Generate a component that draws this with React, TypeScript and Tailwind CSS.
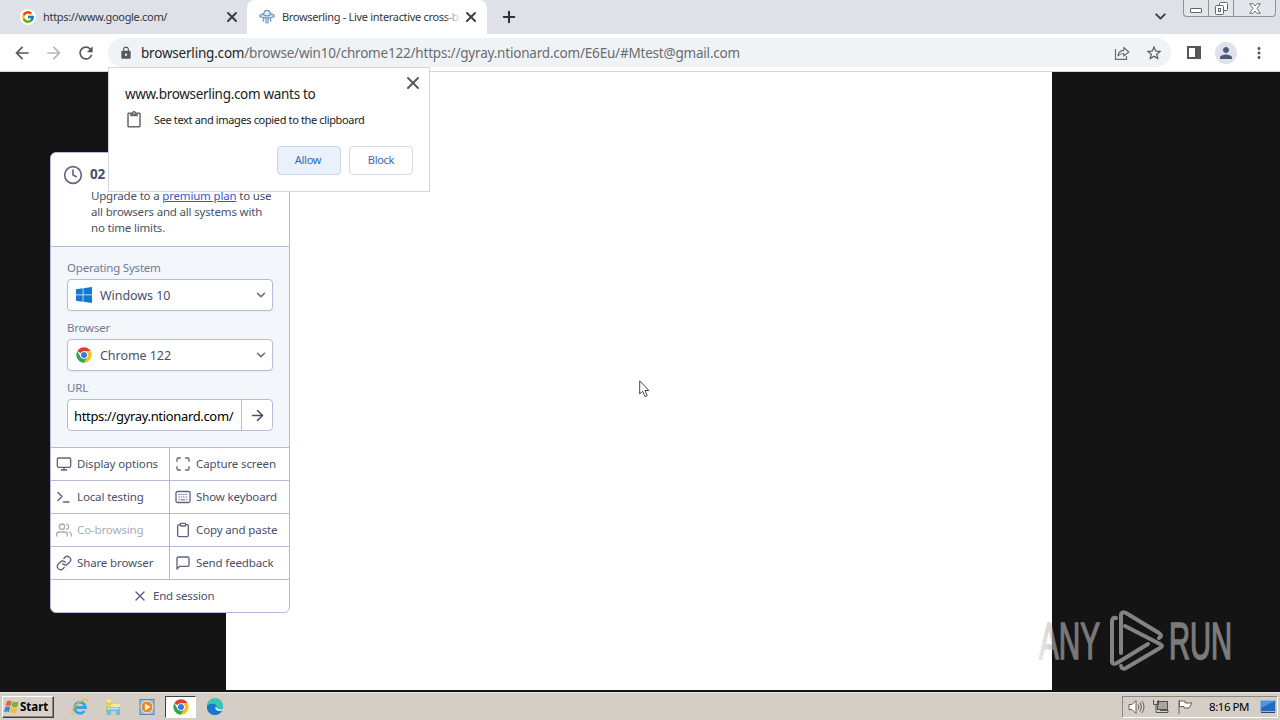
import React from 'react';
import type { IconType } from 'react-icons';
import { FcGoogle } from 'react-icons/fc';
import {
    FiArrowRight,
    FiChevronDown,
    FiClipboard,
    FiClock,
    FiLink,
    FiMaximize,
    FiMessageSquare,
    FiMonitor,
    FiPlus,
    FiUsers,
    FiX,
} from 'react-icons/fi';
import {
    MdArrowBack,
    MdArrowForward,
    MdContentPaste,
    MdLock,
    MdMoreVert,
    MdPerson,
    MdRefresh,
    MdStarBorder,
} from 'react-icons/md';

interface IconProps {
    className?: string;
}

const ChromeLogo: React.FC<IconProps> = ({ className }) => (
    <svg viewBox="0 0 48 48" className={className}>
        <circle cx="24" cy="24" r="23" fill="#fff" />
        <path d="M24 24 4.1 12.5A23 23 0 0 1 43.9 12.5H24Z" fill="#e33b2e" />
        <path d="M24 12.5H43.9A23 23 0 0 1 24 47L34 29.7Z" fill="#fbc116" />
        <path d="M4.1 12.5 14 29.7 24 35.5 34 29.7 24 47A23 23 0 0 1 4.1 12.5Z" fill="#2da94f" />
        <circle cx="24" cy="24" r="11.5" fill="#fff" />
        <circle cx="24" cy="24" r="9" fill="#3b78e7" />
    </svg>
);

const WindowsLogo: React.FC<IconProps> = ({ className }) => (
    <svg viewBox="0 0 16 16" className={className} fill="#1179cf">
        <path d="M0 2.2 6.7 1.3V7.6H0ZM7.4 1.2 16 0V7.6H7.4ZM0 8.3H6.7V14.7L0 13.8ZM7.4 8.3H16V16L7.4 14.8Z" />
    </svg>
);

const UfoIcon: React.FC<IconProps> = ({ className }) => (
    <svg viewBox="0 0 16 16" className={className} fill="none" stroke="#6d98c8" strokeWidth="1.3">
        <path d="M4.6 4.6C-1.5 6.4-.2 9 8 9s9.5-2.6 3.4-4.4" fill="#dce8f5" />
        <path d="M4.7 6C4.7 2.8 6 1.4 8 1.4S11.3 2.8 11.3 6C9.5 7 6.5 7 4.7 6Z" fill="#e6eff8" />
        <path d="M4.8 9.2 4 12.5M7 9.5V14.5M9 9.5V14.5M11.2 9.2 12 12.5" />
    </svg>
);

const TerminalIcon: React.FC<IconProps> = ({ className }) => (
    <svg viewBox="0 0 16 16" className={className} fill="none" stroke="currentColor" strokeWidth="1.5" strokeLinecap="round" strokeLinejoin="round">
        <path d="M2 3.5 6 7.5 2 11.5M7.5 13H13" />
    </svg>
);

const KeyboardIcon: React.FC<IconProps> = ({ className }) => (
    <svg viewBox="0 0 16 16" className={className} fill="none" stroke="currentColor">
        <rect x="1" y="2.5" width="14" height="11" rx="1.5" strokeWidth="1.3" />
        <path d="M3.5 5.5H13M3.5 8H13" strokeDasharray="1.3 1" />
        <path d="M3.5 10.8H4.8M5.8 10.8H10.2M11.2 10.8H12.5" />
    </svg>
);

const ShareIcon: React.FC<IconProps> = ({ className }) => (
    <svg viewBox="0 0 16 16" className={className} fill="none" stroke="#6a6d71" strokeWidth="1.2">
        <path d="M1.5 4V14.3H12.5V11" />
        <path d="M4 10.8C4.2 7.5 6.5 5.5 9.8 5.3V2.5L14.8 7 9.8 11V8.5C7.5 8.5 5.5 9 4 10.8Z" strokeLinejoin="round" />
    </svg>
);

const CaptionButtons: React.FC = () => (
    <div className="flex h-[17px] w-[93px] rounded-b-[4px] border border-t-0 border-[#8f949b] bg-[#e2e5ea]">
        <div className="flex w-[25px] items-end justify-center border-r border-[#8f949b] pb-[3px]">
            <div className="h-[5px] w-3 rounded-[1px] border border-[#63676d] bg-white" />
        </div>
        <div className="flex w-[25px] items-center justify-center border-r border-[#8f949b]">
            <svg viewBox="0 0 13 13" className="h-[13px] w-[13px]" fill="#fff" stroke="#63676d">
                <rect x="4.5" y=".5" width="8" height="8" rx="1" />
                <rect x=".5" y="3.5" width="8" height="9" rx="1" />
                <rect x="3.5" y="6.5" width="2" height="3" />
            </svg>
        </div>
        <div className="flex flex-1 items-center justify-center">
            <svg viewBox="0 0 12 11" className="h-[11px] w-3" fill="#fff" stroke="#63676d" strokeWidth=".9">
                <path d="M.7.7H4L6 3 8 .7H11.3L8 5.5 11.3 10.3H8L6 8 4 10.3H.7L4 5.5Z" />
            </svg>
        </div>
    </div>
);

const TabStrip: React.FC = () => (
    <div className="flex h-[34px] items-start bg-[#dee1e8]">
        <div className="flex h-[34px] w-[247px] items-center pl-5">
            <div className="flex h-4 w-4 items-center justify-center rounded-full bg-white">
                <FcGoogle size={14} />
            </div>
            <span className="ml-[7px] w-[177px] whitespace-nowrap text-[11px] tracking-[-0.32px] text-[#34373b]">https://www.google.com/</span>
            <FiX size={16} strokeWidth={3} className="ml-1 shrink-0 text-[#3c4043]" />
        </div>
        <div className="flex h-[34px] w-[240px] items-center rounded-t-lg bg-white pl-3">
            <UfoIcon className="h-4 w-4 shrink-0" />
            <div className="relative ml-[7px] w-[176px] whitespace-nowrap text-[11px] tracking-[-0.32px] text-[#34373b]">
                Browserling - Live interactive cross-b
                <div className="absolute inset-y-0 right-0 w-3 bg-gradient-to-r from-white/20 to-white/80" />
            </div>
            <FiX size={16} strokeWidth={3} className="ml-[5px] shrink-0 text-[#3c4043]" />
        </div>
        <FiPlus size={18} strokeWidth={2.8} className="mt-2 ml-[13px] text-[#303338]" />
        <div className="flex-1" />
        <FiChevronDown size={17} strokeWidth={2.8} className="mt-2 mr-[14px] text-[#3c4043]" />
        <CaptionButtons />
        <div className="w-1" />
    </div>
);

const Toolbar: React.FC = () => (
    <div className="flex h-[38px] items-center border-b border-[#d4d6da] bg-white pr-3 pl-3">
        <MdArrowBack size={20} className="text-[#55585c]" />
        <MdArrowForward size={20} className="ml-3 text-[#b6b8bb]" />
        <MdRefresh size={20} className="ml-3 text-[#55585c]" />
        <div className="ml-3 flex h-[29px] w-[1063px] items-center rounded-full bg-[#f0f3f6] pr-2 pl-[11px]">
            <MdLock size={14} className="text-[#55585c]" />
            <div className="ml-2 flex-1 pt-0.5 text-[13.5px] tracking-[-0.2px] whitespace-nowrap text-[#696c70]">
                <span className="text-[#24272a]">browserling.com</span>/browse/win10/chrome122/https://gyray.ntionard.com/E6Eu/#Mtest@gmail.com
            </div>
            <ShareIcon className="h-4 w-4" />
            <MdStarBorder size={18} className="ml-[15px] text-[#55585c]" />
        </div>
        <div className="ml-4 h-[13px] w-[14px] border-2 border-r-[6px] border-[#55585c]" />
        <div className="ml-[14px] flex h-[22px] w-[22px] items-center justify-center rounded-full bg-[#dfe2e8] text-[#4d5a78]">
            <MdPerson size={18} />
        </div>
        <MdMoreVert size={18} className="ml-[13px] text-[#55585c]" />
    </div>
);

const PermissionPrompt: React.FC = () => (
    <div className="absolute top-[67px] left-[108px] h-[125px] w-[322px] border border-[#d3d6da] bg-white px-4 text-[#202226]">
        <FiX size={20} strokeWidth={2.4} className="absolute top-[5px] right-1.5 text-[#55585c]" />
        <div className="mt-[16px] text-[13.5px] leading-5 tracking-[-0.31px] whitespace-nowrap">www.browserling.com wants to</div>
        <div className="mt-[7px] flex h-[18px] items-center">
            <MdContentPaste size={18} className="text-[#65686d]" />
            <span className="ml-[11px] text-[11px] tracking-[-0.36px] whitespace-nowrap">See text and images copied to the clipboard</span>
        </div>
        <div className="mt-[17px] flex justify-end gap-2 text-[11px] tracking-[-0.3px] text-[#2d6bbd]">
            <button className="h-[29px] w-16 rounded-[4px] border border-[#c8d5e6] bg-[#e9f1fd] pr-[2px] pb-px">Allow</button>
            <button className="h-[29px] w-16 rounded-[4px] border border-[#d8dbe4] bg-white pb-px">Block</button>
        </div>
    </div>
);

interface SelectFieldProps {
    label: string;
    value: string;
    Icon: React.FC<IconProps>;
}

const SelectField: React.FC<SelectFieldProps> = ({ label, value, Icon }) => (
    <div className="h-[60px]">
        <div className="h-[22px] text-[11.5px] leading-[22px] tracking-[-0.2px] text-[#727a95]">{label}</div>
        <div className="flex h-8 items-center rounded-[4px] border border-[#b7bdd6] bg-white pr-[5px] pl-2 text-[12.5px] tracking-[-0.05px] text-[#48506b] shadow-xs">
            <Icon className="h-4 w-4" />
            <span className="ml-2 flex-1 pt-0.5">{value}</span>
            <FiChevronDown size={14} strokeWidth={2.6} className="-mr-px text-[#656b7a]" />
        </div>
    </div>
);

interface Action {
    label: string;
    Icon: IconType | React.FC<IconProps>;
    disabled?: boolean;
}

const ACTIONS: Action[] = [
    { label: 'Display options', Icon: FiMonitor },
    { label: 'Capture screen', Icon: FiMaximize },
    { label: 'Local testing', Icon: TerminalIcon },
    { label: 'Show keyboard', Icon: KeyboardIcon },
    { label: 'Co-browsing', Icon: FiUsers, disabled: true },
    { label: 'Copy and paste', Icon: FiClipboard },
    { label: 'Share browser', Icon: FiLink },
    { label: 'Send feedback', Icon: FiMessageSquare },
];

const SessionPanel: React.FC = () => (
    <div className="absolute top-[152px] left-[50px] h-[461px] w-[240px] overflow-hidden rounded-md border border-[#b5bad8] bg-white text-[#48506b]">
        <div className="flex h-[94px] border-b border-[#b5bad8] pt-3 pl-3">
            <FiClock size={20} strokeWidth={2} className="shrink-0 text-[#5f6780]" />
            <div className="ml-2 text-[11.5px] leading-4 tracking-[-0.18px] whitespace-nowrap">
                <div className="-ml-px h-[23px] text-[13.5px] leading-[18px] font-bold">02</div>
                Upgrade to a <span className="text-[#3558c8] underline">premium plan</span> to use<br />
                all browsers and all systems with<br />
                no time limits.
            </div>
        </div>
        <div className="h-[201px] border-b border-[#b5bad8] bg-[#f3f6fb] px-4 pt-[10px]">
            <SelectField label="Operating System" value="Windows 10" Icon={WindowsLogo} />
            <SelectField label="Browser" value="Chrome 122" Icon={ChromeLogo} />
            <div className="h-[22px] text-[11.5px] leading-[22px] tracking-[-0.2px] text-[#727a95]">URL</div>
            <div className="flex h-8 items-stretch rounded-[4px] border border-[#b7bdd6] bg-white">
                <div className="w-[174px] border-r border-[#b7bdd6] pl-1.5 text-[13px] leading-8 tracking-[-0.34px] whitespace-nowrap text-black">https://gyray.ntionard.com/</div>
                <div className="flex flex-1 items-center justify-center">
                    <FiArrowRight size={17} strokeWidth={2.3} />
                </div>
            </div>
        </div>
        <div className="grid grid-cols-[119px_119px]">
            {ACTIONS.map(({ label, Icon, disabled }) => (
                <div
                    key={label}
                    className={`flex h-[33px] items-center border-b border-[#b5bad8] pl-[5px] text-[11.5px] tracking-[-0.13px] whitespace-nowrap odd:border-r ${disabled ? 'text-[#a7adbb]' : ''}`}
                >
                    <Icon className={`h-4 w-4 shrink-0 ${disabled ? '' : 'text-[#5c6580]'}`} />
                    <span className="ml-[5px]">{label}</span>
                </div>
            ))}
        </div>
        <div className="flex h-8 items-center pl-[81px] text-[11.5px] tracking-[-0.2px]">
            <FiX size={16} className="text-[#5c6580]" />
            <span className="ml-[5px]">End session</span>
        </div>
    </div>
);

const Watermark: React.FC = () => (
    <div className="absolute top-[608px] left-[1036px] h-[65px] w-[202px]">
        <svg viewBox="-2 0 202 65" className="h-[65px] w-[202px]" fill="none">
            <defs>
                <linearGradient id="fade" gradientUnits="userSpaceOnUse" x1="0" y1="0" x2="194" y2="0">
                    <stop offset="0" stopColor="#e8e8e8" />
                    <stop offset=".071" stopColor="#d2d2d2" />
                    <stop offset=".072" stopColor="#777" />
                    <stop offset="1" stopColor="#7c7c7c" />
                </linearGradient>
            </defs>
            <g fill="url(#fade)" stroke="url(#fade)" strokeWidth="1.6" fontFamily="'Liberation Sans Narrow', 'Liberation Sans', sans-serif" fontSize="51">
                <text x="1" y="50.5" textLength="61" lengthAdjust="spacingAndGlyphs">ANY</text>
                <text x="131" y="50.5" textLength="63" lengthAdjust="spacingAndGlyphs">RUN</text>
            </g>
            <g stroke="#838383" strokeWidth="4" strokeLinejoin="round" strokeLinecap="round">
                <path d="M78 10Q74 9 74 14V54Q75 57 79 55L110 36" />
                <path d="M83 45V7Q83 3 88 5L121 25Q125 28 121 30" />
                <path d="M87 18 122 36Q126 38 122 40L88 60Q84 62 83 58" />
            </g>
        </svg>
    </div>
);

const Cursor: React.FC = () => (
    <svg viewBox="0 0 11 18" className="absolute top-[380px] left-[639px] h-[18px] w-[11px]" fill="#fff" stroke="#333" strokeWidth=".9">
        <path d="M.7.8V14L3.6 11.3 6 16.6 8.2 15.6 6 10.5H9.8Z" />
    </svg>
);

const Taskbar: React.FC = () => (
    <div className="flex h-7 items-start border-t border-[#e9e6e0] bg-[#d5cec6] pt-[3px] pl-0.5">
        <div className="flex h-[22px] w-[52px] items-center border border-t-white border-r-[#404040] border-b-[#404040] border-l-white bg-[#d7d1c9] pl-px text-black shadow-[inset_-1px_-1px_0_#8c8780]">
            <svg viewBox="0 0 16 16" className="h-4 w-4 shrink-0">
                <path d="M3 2Q5 .8 7.5 2L6.5 7Q4 6 1.5 7.3Z" fill="#e5672b" />
                <path d="M8.5 2.3Q11 4 14.5 2.5L13.3 8Q10 9 7.5 7.3Z" fill="#78b43b" />
                <path d="M1.3 8.3Q4 7 6.2 8L5 13Q3 12 0 13.3Z" fill="#3d87ce" />
                <path d="M7.2 8.4Q10 10 13 9L11.8 14Q8.5 15 6 13.3Z" fill="#f5bd29" />
            </svg>
            <span className="text-[11.5px] font-bold">Start</span>
        </div>
        <svg viewBox="0 0 20 20" className="mt-px ml-4 h-5 w-5" fill="none">
            <path d="M4.5 10.5H15.5A5.5 5.5 0 1 0 14.5 14" stroke="#3ba3df" strokeWidth="2.8" />
            <path d="M3 17C0 17 3 10 8 6S18 1 17.5 5" stroke="#e8bd38" strokeWidth="1.4" />
        </svg>
        <svg viewBox="0 0 20 20" className="mt-px ml-[13px] h-5 w-5">
            <path d="M3 4H8L9 6H16V15H3Z" fill="#eacb67" />
            <path d="M4 2.5H8V5H4ZM8 7H17V11H8Z" fill="#f8e7a0" />
            <path d="M3 10H17V18H13V14H8V18H4Z" fill="#79b9d5" />
            <path d="M4 10.5H16V12.5H4Z" fill="#b7dfec" />
        </svg>
        <svg viewBox="0 0 20 20" className="mt-px ml-[14px] h-5 w-5">
            <rect x="3" y="2.5" width="14" height="15" fill="#8ac2e8" stroke="#4b8abd" />
            <circle cx="10" cy="10" r="6" fill="#ef8620" stroke="#fff" strokeWidth=".8" />
            <path d="M8 6.5 13.5 10 8 13.5Z" fill="#fff" />
        </svg>
        <div className="ml-2 flex h-[22px] w-[31px] items-center justify-center border border-t-[#404040] border-r-white border-b-white border-l-[#404040] bg-white">
            <ChromeLogo className="h-4 w-4" />
        </div>
        <svg viewBox="0 0 20 20" className="mt-px ml-[9px] h-5 w-5">
            <circle cx="10" cy="10" r="8" fill="#1379c9" />
            <path d="M2 9A8 8 0 0 1 18 9C18 14 13 14 11.5 12.5 13 10 11 7 8 7 5 7 3 8 2 9Z" fill="#38c6ae" />
            <path d="M2 10C3 6 10 6 11.5 9 9 10 10 15 17 13.5 13 20 2 19 2 10Z" fill="#1679c9" />
            <path d="M11 9.5C9 12 12 15 17 13.5L18.5 11.5C16 13 12 13 11 9.5Z" fill="#e8f5f8" />
        </svg>
        <div className="flex-1" />
        <div className="flex h-[22px] w-[156px] items-center border border-t-[#8c8780] border-r-white border-b-white border-l-[#8c8780] pl-[5px] text-black">
            <svg viewBox="0 0 18 16" className="h-4 w-[18px]" fill="#fff" stroke="#66635e">
                <path d="M1 5.5H4L8 1.5V14.5L4 10.5H1Z" />
                <path d="M10 5.5Q12 8 10 10.5M12 3.5Q15 8 12 12.5M14 2Q18 8 14 14" fill="none" />
            </svg>
            <svg viewBox="0 0 18 16" className="ml-1.5 h-4 w-[18px]" fill="#fff" stroke="#55524e">
                <rect x="5.5" y="2.5" width="10" height="8" fill="#a7a5a1" />
                <path d="M1.5 1V5.5H6.5V1M4 5.5V13.5H16V11.5H8" fill="none" />
            </svg>
            <svg viewBox="0 0 17 16" className="ml-[7px] h-4 w-[17px]" fill="#fff" stroke="#66635e">
                <path d="M2 1V15M2.5 2H8V4H15L12 9H7V7.5H2.5Z" />
            </svg>
            <span className="ml-[15px] w-[42px] text-[11.5px] tracking-[-0.45px] whitespace-nowrap">8:16 PM</span>
            <svg viewBox="0 0 16 14" className="ml-[9px] h-[14px] w-4">
                <rect x=".5" y=".5" width="15" height="11" fill="#236bc0" stroke="#90b8dc" />
                <path d="M1 1H15L1 8Z" fill="#4f97dc" />
                <path d="M1 12.5H15" stroke="#2c4764" />
            </svg>
        </div>
        <div className="w-0.5" />
    </div>
);

const App: React.FC = () => (
    <div className="relative flex h-[720px] w-[1280px] flex-col overflow-hidden bg-[#141414] font-['Tahoma','Noto_Sans',sans-serif]">
        <TabStrip />
        <Toolbar />
        <main className="flex h-[620px] items-start bg-[#141414] pl-[226px]">
            <div className="h-[618px] w-[826px] bg-white" />
        </main>
        <Taskbar />
        <SessionPanel />
        <PermissionPrompt />
        <Cursor />
        <Watermark />
    </div>
);

export default App;
